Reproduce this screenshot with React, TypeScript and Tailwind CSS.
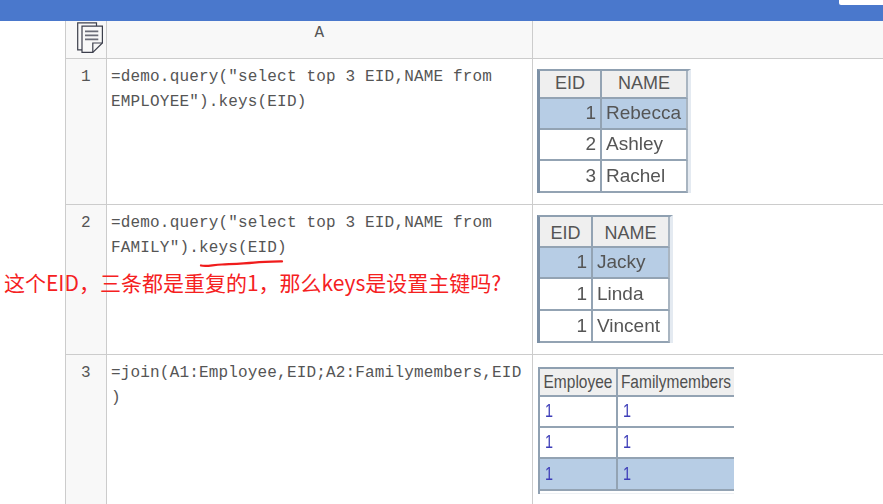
import React from "react";

const mono = "font-['Liberation_Mono','Courier_New',monospace] text-[16px] leading-[25px] tracking-[0.17px] text-[#555555]";
const sans = "font-['Liberation_Sans',Arial,sans-serif]";

function Cell({ className, children }: { className: string; children?: React.ReactNode }) {
  return <div className={"flex items-center overflow-hidden whitespace-nowrap border-b-2 border-[#93a3b3] " + className}>{children}</div>;
}

const head = "justify-center bg-[#efefef] text-[18px]";
const divider = "border-r-2";
const num = "justify-end pr-1";
const name = "pl-1";
const hl = "bg-[#b7cde5]";

function StudentTable({ cols, rows, headPad, h1, h2, data }: { cols: string; rows: string; headPad: string; h1: string; h2: string; data: [string, string][] }) {
  return (
    <div className={"grid w-fit border-t-2 border-l-[3px] border-r-[3px] border-[#8fa0b1] border-l-[#7c90a6] border-r-[#e4eaf1] blur-[0.5px] " + sans + " text-[19px] text-[#555555] " + cols + " " + rows}>
      <Cell className={head + " " + headPad + " " + divider}>{h1}</Cell>
      <Cell className={head + " " + headPad + " border-r-2 border-r-[#a9b5c1]"}>{h2}</Cell>
      {data.map(([a, b], i) => (
        <React.Fragment key={i}>
          <Cell className={num + " " + divider + " " + (i === 0 ? hl : "")}>{a}</Cell>
          <Cell className={name + " border-r-2 border-r-[#a9b5c1] " + (i === 0 ? hl : "")}>{b}</Cell>
        </React.Fragment>
      ))}
    </div>
  );
}

function JoinTable() {
  const blue = "pl-1 text-[#3d3db8] text-[18px]";
  const jhead = "justify-center bg-[#efefef]";
  const one = <span className="inline-block scale-x-[0.8]">1</span>;
  return (
    <div className={"grid w-fit grid-cols-[78px_116px] grid-rows-[28px_31px_31px_32px_3px] border-t-2 border-l-2 border-[#8fa0b1] blur-[0.5px] " + sans + " text-[15.5px] text-[#4f4f4f]"}>
      <Cell className={jhead + " " + divider}><span className="inline-block scale-y-[1.15]">Employee</span></Cell>
      <Cell className={jhead}><span className="inline-block scale-y-[1.15]">Familymembers</span></Cell>
      <Cell className={blue + " " + divider}>{one}</Cell>
      <Cell className={blue}>{one}</Cell>
      <Cell className={blue + " " + divider}>{one}</Cell>
      <Cell className={blue}>{one}</Cell>
      <Cell className={blue + " " + divider + " " + hl}>{one}</Cell>
      <Cell className={blue + " " + hl}>{one}</Cell>
      <div className="col-span-2 border-b border-[#eef1f4]" />
    </div>
  );
}

function SheetIcon() {
  return (
    <svg width="26" height="31" viewBox="0 0 26 31" fill="none" stroke="#3c3f4c" strokeWidth="1.2">
      <path d="M19.5 4V0.9H0.7V27.9H5" />
      <path d="M5 4.2H25.4V21L15.8 30.4H5Z" />
      <path d="M25.4 21H15.8V30.4" />
      <path d="M8 9.3H21.3M8 13.3H21.3M8 17.3H21.3" stroke="#6b6d78" strokeWidth="1.8" />
    </svg>
  );
}

export default function App() {
  return (
    <div className="relative flex h-[504px] w-[883px] flex-col overflow-hidden bg-white">
      <header className="flex h-[21px] shrink-0 items-start justify-end bg-[#4a78cc]">
        <div className="h-[5px] w-[44px] rounded-bl-[2px] bg-white" />
      </header>

      <main className="ml-[65px] grid flex-1 grid-cols-[41px_426px_1fr] grid-rows-[38px_146px_150px_1fr] border-l border-[#cccccc]">
        <div className="flex justify-start border-r border-b border-[#cccccc] bg-[#f8f8f8] pt-px pl-[11px]">
          <SheetIcon />
        </div>
        <div className={"border-r border-b border-[#cccccc] bg-[#f8f8f8] text-center " + mono}>A</div>
        <div className="border-b border-[#cccccc] bg-[#f8f8f8]" />

        <div className={"border-r border-b border-[#cccccc] bg-[#f8f8f8] pt-[6px] text-center " + mono}>1</div>
        <div className={"border-r border-b border-[#cccccc] px-1 pt-[6px] " + mono}>
          <div>=demo.query("select top 3 EID,NAME from</div>
          <div>EMPLOYEE").keys(EID)</div>
        </div>
        <div className="border-b border-[#cccccc] pt-[10px] pl-1">
          <StudentTable
            cols="grid-cols-[62px_86px]"
            rows="grid-rows-[28px_31px_31px_32px]"
            headPad="pb-[2px]"
            h1="EID"
            h2="NAME"
            data={[["1", "Rebecca"], ["2", "Ashley"], ["3", "Rachel"]]}
          />
        </div>

        <div className={"border-r border-b border-[#cccccc] bg-[#f8f8f8] pt-[6px] text-center " + mono}>2</div>
        <div className={"border-r border-b border-[#cccccc] px-1 pt-[6px] " + mono}>
          <div>=demo.query("select top 3 EID,NAME from</div>
          <div>FAMILY").keys(EID)</div>
        </div>
        <div className="border-b border-[#cccccc] pt-[10px] pl-1">
          <StudentTable
            cols="grid-cols-[53px_77px]"
            rows="grid-rows-[31px_31px_32px_32px]"
            headPad="pt-[3px]"
            h1="EID"
            h2="NAME"
            data={[["1", "Jacky"], ["1", "Linda"], ["1", "Vincent"]]}
          />
        </div>

        <div className={"border-r border-[#cccccc] bg-[#f8f8f8] pt-[6px] text-center " + mono}>3</div>
        <div className={"border-r border-[#cccccc] px-1 pt-[6px] " + mono}>
          <div>=join(A1:Employee,EID;A2:Familymembers,EID</div>
          <div>)</div>
        </div>
        <div className="pt-3 pl-[5px]">
          <JoinTable />
        </div>
      </main>

      <svg className="absolute top-[258px] left-[198px]" width="88" height="12" viewBox="0 0 88 12" fill="none">
        <path d="M3 7.5C8 9 14 7 24 6.5C38 5.8 46 5.5 56 4.6C66 3.8 76 3.6 84 3.4" stroke="#f01c1c" strokeWidth="2.2" strokeLinecap="round" />
      </svg>

      <div className="absolute top-[267px] left-[4px] whitespace-nowrap font-['Noto_Sans_CJK_SC','Liberation_Sans',sans-serif] text-[21px] leading-[30px] text-[#f5211f]">
        {"这个EID\uFF0C三条都是重复的1\uFF0C那么keys是设置主键吗?"}
      </div>
    </div>
  );
}
